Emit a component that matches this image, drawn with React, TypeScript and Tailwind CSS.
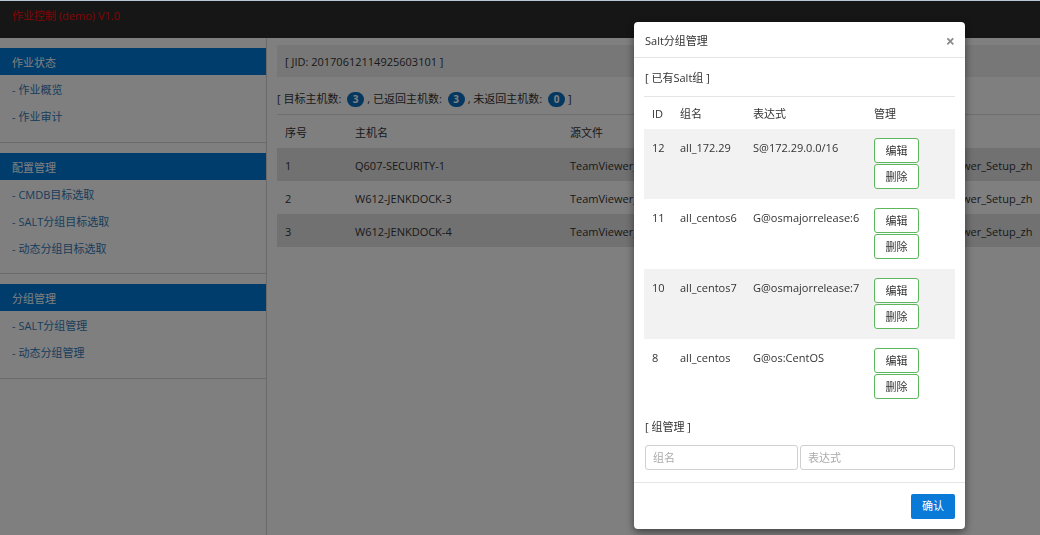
import { useState } from "react";

const menus = [
  { title: "作业状态", items: ["- 作业概览", "- 作业审计"] },
  { title: "配置管理", items: ["- CMDB目标选取", "- SALT分组目标选取", "- 动态分组目标选取"] },
  { title: "分组管理", items: ["- SALT分组管理", "- 动态分组管理"] },
];

const hosts = [
  { no: "1", name: "Q607-SECURITY-1" },
  { no: "2", name: "W612-JENKDOCK-3" },
  { no: "3", name: "W612-JENKDOCK-4" },
];

const groups = [
  { id: "12", name: "all_172.29", expr: "S@172.29.0.0/16" },
  { id: "11", name: "all_centos6", expr: "G@osmajorrelease:6" },
  { id: "10", name: "all_centos7", expr: "G@osmajorrelease:7" },
  { id: "8", name: "all_centos", expr: "G@os:CentOS" },
];

function Badge({ n }: { n: string }) {
  return (
    <span className="mx-[3px] inline-flex h-[15px] min-w-[17px] items-center justify-center rounded-full bg-[#0a70c0] px-[5px] text-[10px] font-bold leading-none text-white">
      {n}
    </span>
  );
}

export default function App() {
  const [name, setName] = useState("");
  const [expr, setExpr] = useState("");

  return (
    <div className="relative flex min-h-screen flex-col border-t border-[#b8c6d6] bg-white font-['Open_Sans','Noto_Sans_CJK_SC',sans-serif] text-[11px] text-[#333]">
      {/* navbar */}
      <div className="h-[37px] shrink-0 bg-[#2c2c2c] pl-[12px] pt-[7px] text-[11px] text-[#ff0a0a]">
        作业控制 (demo) V1.0
      </div>

      <div className="flex flex-1">
        {/* sidebar */}
        <div className="w-[267px] shrink-0 border-r border-[#d4d4d4]">
          {menus.map((m, i) => (
            <div key={i} className={`border-b border-[#d4d4d4] pt-[10px] ${i === 1 ? "pb-[12px]" : "pb-[13px]"}`}>
              <div className="flex h-[27px] items-center bg-[#007ad8] pl-[12px] pt-[3px] text-white">{m.title}</div>
              {m.items.map((it) => (
                <div key={it} className="flex h-[27px] items-center pl-[12px] pt-[4px] text-[#337ab7]">
                  {it}
                </div>
              ))}
            </div>
          ))}
        </div>

        {/* main */}
        <div className="min-w-0 flex-1 overflow-hidden pl-[10px] pt-[7px]">
          <div className="flex h-[32px] items-center bg-[#eeeeee] pl-[8px] pt-[2px]">[ JID: 20170612114925603101 ]</div>
          <div className="border-b border-[#dddddd] pt-[14px] pb-[7px] leading-[16px]">
            [ 目标主机数: <Badge n="3" />, 已返回主机数: <Badge n="3" />, 未返回主机数: <Badge n="0" />]
          </div>
          <div className="grid h-[33px] grid-cols-[70px_215px_348px_1fr] items-center pt-[4px]">
            <div className="pl-[8px]">序号</div>
            <div className="pl-[8px]">主机名</div>
            <div className="pl-[8px]">源文件</div>
            <div className="pl-[8px]">目标文件</div>
          </div>
          {hosts.map((h, i) => (
            <div
              key={h.no}
              className={`grid h-[33px] grid-cols-[70px_215px_348px_1fr] items-center whitespace-nowrap pt-[3px] ${i % 2 === 0 ? "bg-[#e2e2e2]" : ""}`}
            >
              <div className="pl-[8px]">{h.no}</div>
              <div className="pl-[8px]">{h.name}</div>
              <div className="overflow-hidden pl-[8px]">TeamViewer_Setup_zh-cn.exe</div>
              <div className="overflow-hidden pl-[8px]">TeamViewer_Setup_zh</div>
            </div>
          ))}
        </div>
      </div>

      {/* backdrop */}
      <div className="fixed inset-x-0 top-px bottom-0 bg-black/50" />

      {/* modal */}
      <div className="fixed left-[634px] top-[22px] w-[331px] rounded-[4px] bg-white shadow-[0_3px_9px_rgba(0,0,0,0.5)]">
        <div className="flex h-[36px] items-center justify-between border-b border-[#e5e5e5] pl-[11px] pr-[10px] pt-[3px]">
          <span className="text-[11px] text-[#333]">Salt分组管理</span>
          <span className="text-[16px] font-bold leading-none text-[#8a8a8a]">×</span>
        </div>

        <div className="px-[10px] pb-[12px]">
          <div className="flex h-[39px] items-center border-b border-[#e5e5e5] pl-px pt-[3px]">[ 已有Salt组 ]</div>
          <div className="grid h-[32px] grid-cols-[28px_73px_121px_1fr] items-center pt-[3px]">
            <div className="pl-[8px]">ID</div>
            <div className="pl-[8px]">组名</div>
            <div className="pl-[8px]">表达式</div>
            <div className="pl-[8px]">管理</div>
          </div>
          {groups.map((g, i) => (
            <div
              key={g.id}
              className={`grid h-[70px] grid-cols-[28px_73px_121px_1fr] whitespace-nowrap ${i % 2 === 0 ? "bg-[#f2f2f2]" : ""}`}
            >
              <div className="pl-[8px] pt-[11px]">{g.id}</div>
              <div className="pl-[8px] pt-[11px]">{g.name}</div>
              <div className="pl-[8px] pt-[11px]">{g.expr}</div>
              <div className="flex flex-col gap-[1px] pl-[8px] pt-[9px]">
                <button className="h-[25px] w-[45px] rounded-[3px] border border-[#5cb85c] bg-white pt-px text-[11px] text-[#333]">
                  编辑
                </button>
                <button className="h-[25px] w-[45px] rounded-[3px] border border-[#5cb85c] bg-white pt-px text-[11px] text-[#333]">
                  删除
                </button>
              </div>
            </div>
          ))}
          <div className="flex h-[36px] items-center pl-px">[ 组管理 ]</div>
          <div className="flex gap-[2px] pl-px">
            <input
              value={name}
              onChange={(e) => setName(e.target.value)}
              placeholder="组名"
              className="h-[25px] w-[153px] rounded-[3px] border border-[#d0d0d0] px-[7px] text-[11px] outline-none placeholder:text-[#aaa]"
            />
            <input
              value={expr}
              onChange={(e) => setExpr(e.target.value)}
              placeholder="表达式"
              className="h-[25px] w-[155px] rounded-[3px] border border-[#d0d0d0] px-[7px] text-[11px] outline-none placeholder:text-[#aaa]"
            />
          </div>
        </div>

        <div className="flex justify-end border-t border-[#e5e5e5] px-[10px] pt-[11px] pb-[10px]">
          <button className="h-[25px] w-[44px] rounded-[2px] bg-[#0a7ad8] text-[11px] text-white">确认</button>
        </div>
      </div>
    </div>
  );
}
